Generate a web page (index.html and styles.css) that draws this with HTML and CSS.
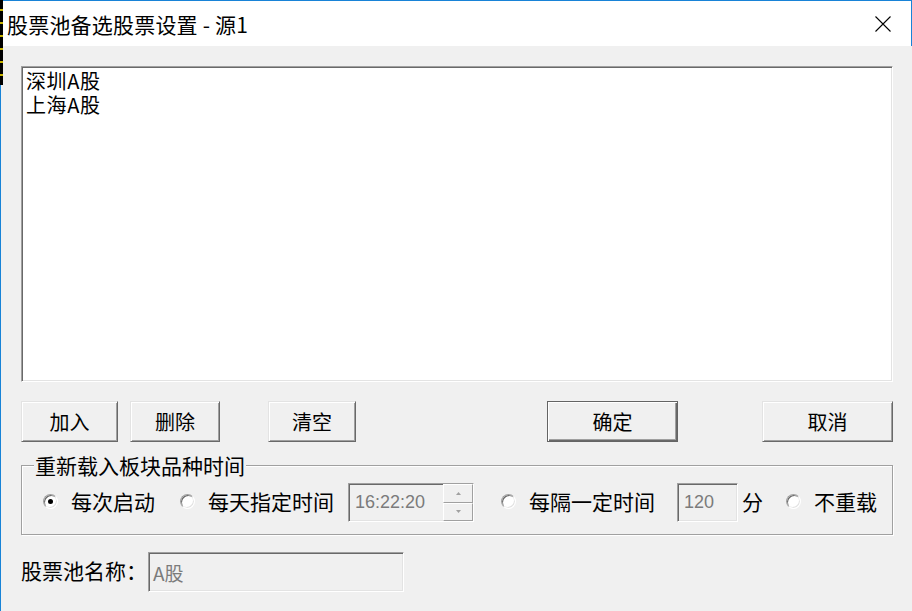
FILE: index.html
```html
<!DOCTYPE html>
<html lang="zh-CN">
<head>
    <meta charset="UTF-8">
    <title>股票池备选股票设置 - 源1</title>
<link rel="stylesheet" href="styles.css">
</head>
<body>
    <div class="window">
        <div class="edge">
            <div class="edge-dark"></div>
            <div class="edge-blue"></div>
        </div>
        <div class="frame">
            <div class="titlebar">
                <span class="title">股票池备选股票设置 - 源1</span>
                <span class="close">
                    <svg width="16" height="16" viewBox="0 0 16 16">
                        <path d="M0.5 0.5 L15.5 15.5 M15.5 0.5 L0.5 15.5" stroke="#000" stroke-width="1.1" fill="none"/>
                    </svg>
                </span>
            </div>

            <div class="body">
                <div class="listbox">
                    <div class="list-item">深圳A股</div>
                    <div class="list-item">上海A股</div>
                </div>

                <div class="buttons">
                    <span class="btn btn-add">加入</span>
                    <span class="btn btn-del">删除</span>
                    <span class="btn btn-clear">清空</span>
                    <span class="btn btn-ok default">确定</span>
                    <span class="btn btn-cancel">取消</span>
                </div>

                <div class="group">
                    <div class="group-title">重新载入板块品种时间</div>
                    <div class="options">
                        <span class="radio on opt-1"></span>
                        <span class="opt-text">每次启动</span>

                        <span class="radio opt-2"></span>
                        <span class="opt-text">每天指定时间</span>
                        <div class="field time-box">
                            <span class="field-text">16:22:20</span>
                            <div class="spin">
                                <span class="spin-btn">
                                    <svg width="5" height="3" viewBox="0 0 5 3"><path d="M2.5 0 L5 3 L0 3 Z" fill="#a0a0a0"/></svg>
                                </span>
                                <span class="spin-btn">
                                    <svg width="5" height="3" viewBox="0 0 5 3"><path d="M0 0 L5 0 L2.5 3 Z" fill="#a0a0a0"/></svg>
                                </span>
                            </div>
                        </div>

                        <span class="radio opt-3"></span>
                        <span class="opt-text">每隔一定时间</span>
                        <div class="field minute-box">
                            <span class="field-text">120</span>
                        </div>
                        <span class="unit">分</span>

                        <span class="radio opt-4"></span>
                        <span class="opt-text">不重载</span>
                    </div>
                </div>

                <div class="name-row">
                    <span class="name-label">股票池名称：</span>
                    <div class="field name-box">
                        <span class="field-text">A股</span>
                    </div>
                </div>
            </div>
        </div>
    </div>
</body>
</html>
```

FILE: styles.css
```css
* {
    box-sizing: border-box;
}
body {
    margin: 0;
    background: #f0f0f0;
    font-family: "Noto Sans CJK SC", "Noto Sans", sans-serif;
    color: #000;
}
.window {
    display: flex;
    width: 912px;
    height: 611px;
    overflow: hidden;
}

/* 左边露出来的背景 + 窗口蓝边 */
.edge {
    width: 3px;
    display: flex;
    flex-direction: column;
}
.edge-dark {
    height: 85px;
    background: repeating-linear-gradient(to bottom, #000 0, #000 9px, #c8b400 9px, #c8b400 11px, #000 11px, #000 13px);
}
.edge-blue {
    flex: 1;
    background: linear-gradient(to right, #1883d7 0, #1883d7 1px, #f0f0f0 1px);
}

.frame {
    flex: 1;
    display: flex;
    flex-direction: column;
}
.titlebar {
    height: 46px;
    display: flex;
    align-items: center;
    justify-content: space-between;
    background: #fff;
    border-top: 1px solid #1883d7;
    border-right: 1px solid #1883d7;
    padding: 0 20px 0 4px;
}
.title {
    font-size: 21px;
    line-height: 24px;
    letter-spacing: 0.2px;
}
.close {
    display: flex;
    margin-top: 1px;
}

.body {
    flex: 1;
    padding: 20px 19px 0 18px;
}

/* 凹陷边框 */
.listbox,
.field {
    border: 1px solid;
    border-color: #a0a0a0 #fff #fff #a0a0a0;
    box-shadow: inset 1px 1px #696969, inset -1px -1px #e3e3e3;
}
.listbox {
    height: 316px;
    background: #fff;
    padding: 2px 0 0 4px;
}
.list-item {
    font-size: 20px;
    line-height: 24px;
    letter-spacing: 0.6px;
}

.buttons {
    display: flex;
    margin-top: 19px;
}
.btn {
    height: 41px;
    display: flex;
    align-items: center;
    justify-content: center;
    font-size: 20px;
    background: #f0f0f0;
    border: 1px solid;
    border-color: #e3e3e3 #696969 #696969 #e3e3e3;
    box-shadow: inset 1px 1px #fff, inset -1px -1px #a0a0a0;
    padding-bottom: 1px;
}
.btn.default {
    border: 1px solid #646464;
    box-shadow: inset 1px 1px #fff, inset -1px -1px #696969, inset -2px -2px #a0a0a0;
}
.btn-add { width: 97px; }
.btn-del { width: 90px; margin-left: 12px; }
.btn-clear { width: 88px; margin-left: 48px; }
.btn-ok { width: 131px; margin-left: 191px; }
.btn-cancel { width: 131px; margin-left: 84px; }

.group {
    margin-top: 23px;
    height: 70px;
    border: 1px solid #a0a0a0;
    box-shadow: inset 1px 1px #fff, 1px 1px #fff;
}
.group-title {
    width: max-content;
    margin: -12px 0 0 12px;
    padding: 0 1px;
    background: #f0f0f0;
    font-size: 21px;
    line-height: 22px;
}
.options {
    display: flex;
    align-items: center;
    height: 39px;
    margin-top: 7px;
    font-size: 21px;
}
.radio {
    width: 15px;
    height: 15px;
    flex: none;
    display: flex;
    align-items: center;
    justify-content: center;
    border-radius: 50%;
    background: #fff;
    border: 1px solid;
    border-color: #a0a0a0 #fff #fff #a0a0a0;
    box-shadow: inset 1px 1px #696969, inset -1px -1px #e3e3e3;
    margin-bottom: 3px;
}
.radio.on::after {
    content: "";
    width: 5px;
    height: 5px;
    border-radius: 50%;
    background: #000;
}
.opt-text {
    margin-left: 13px;
    line-height: 24px;
    padding-bottom: 4px;
}
.opt-1 { margin-left: 21px; }
.opt-2 { margin-left: 25px; }
.opt-3 { margin-left: 27px; }
.opt-4 { margin-left: 23px; }

.field {
    height: 39px;
    display: flex;
    align-items: center;
    background: #f0f0f0;
}
.field-text {
    color: #7b7b7b;
    font-family: "Liberation Sans", "Noto Sans CJK SC", sans-serif;
    font-size: 18px;
    padding-left: 6px;
}
.time-box {
    width: 126px;
    margin-left: 14px;
    justify-content: space-between;
}
.spin {
    width: 30px;
    height: 37px;
    display: flex;
    flex-direction: column;
}
.spin-btn {
    flex: 1;
    display: flex;
    align-items: center;
    justify-content: center;
    border: 1px solid;
    border-color: #fff #a0a0a0 #a0a0a0 #fff;
    background: #f0f0f0;
}
.minute-box {
    width: 61px;
    margin-left: 22px;
}
.unit {
    margin-left: 4px;
    line-height: 24px;
    padding-bottom: 4px;
}

.name-row {
    display: flex;
    align-items: center;
    margin-top: 17px;
}
.name-label {
    width: 127px;
    font-size: 21px;
    line-height: 24px;
    padding-bottom: 4px;
}
.name-box {
    width: 256px;
    height: 40px;
}
.name-box .field-text {
    padding-left: 4px;
    font-family: "Noto Sans CJK SC", sans-serif;
    font-size: 19px;
}
```
